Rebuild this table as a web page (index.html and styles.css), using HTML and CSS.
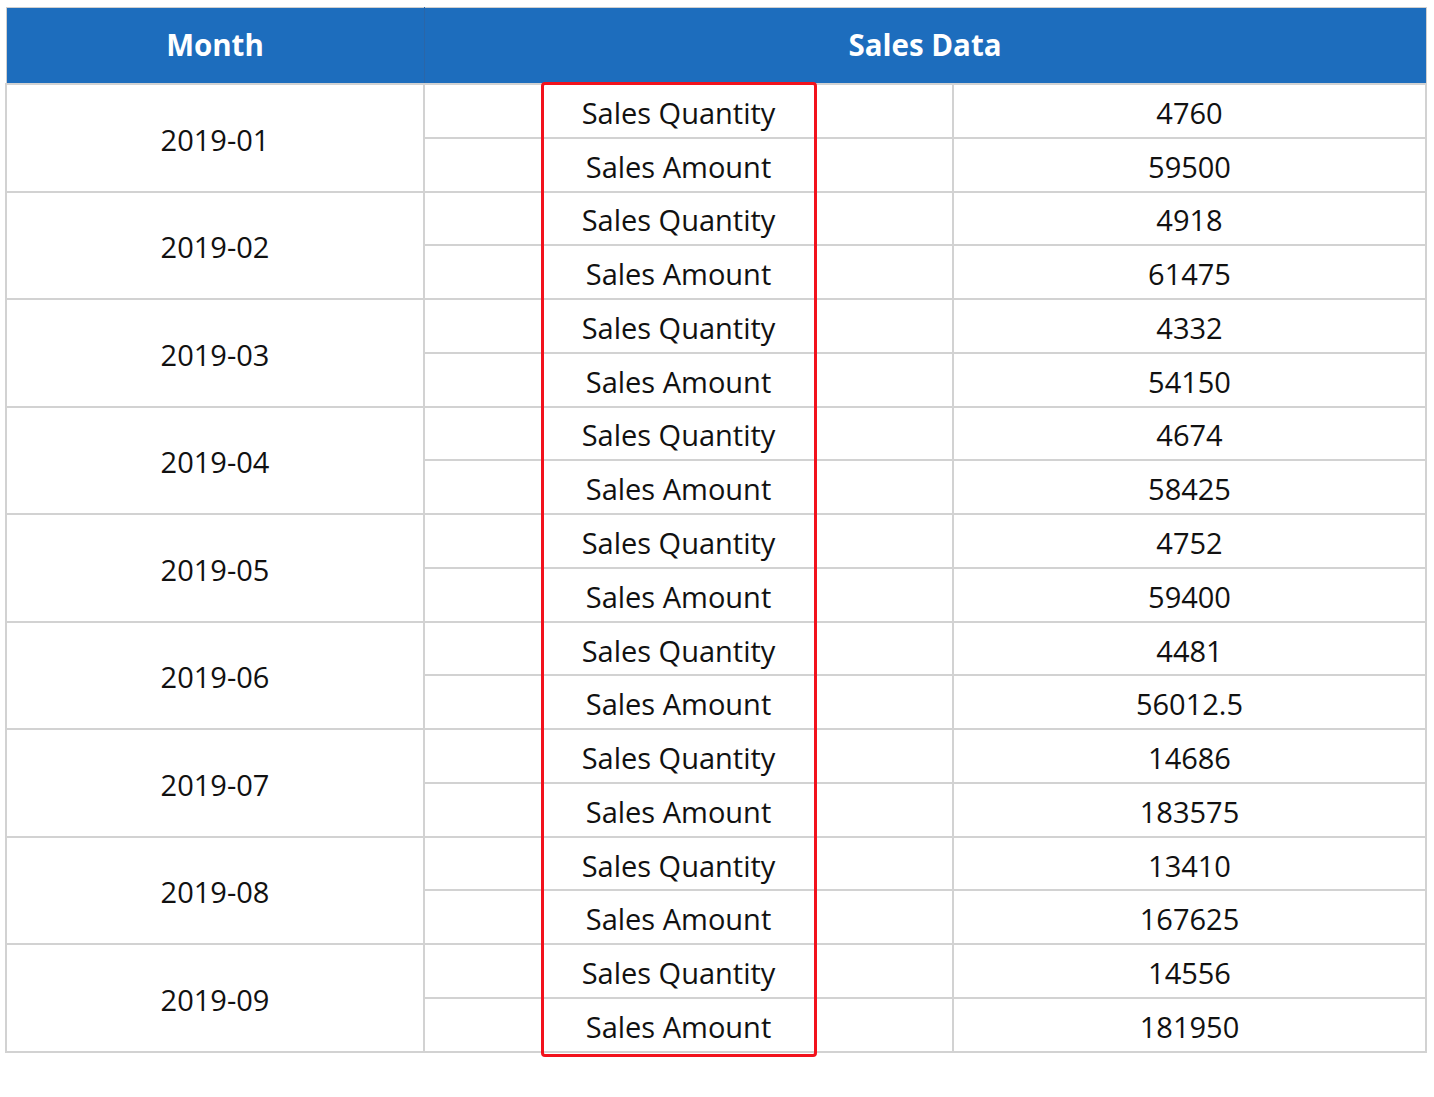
FILE: index.html
```html
<!DOCTYPE html>
<html>
<head>
<meta charset="utf-8">
<link rel="stylesheet" href="styles.css">
</head>
<body>
<div class="wrap">
<table class="sales">
<colgroup>
<col class="col-month">
<col class="col-label">
<col class="col-val">
</colgroup>
<thead>
<tr><th class="c-month">Month</th><th colspan="2">Sales Data</th></tr>
</thead>
<tbody>
<tr><td class="month" rowspan="2">2019-01</td><td class="label">Sales Quantity</td><td class="val">4760</td></tr>
<tr><td class="label">Sales Amount</td><td class="val">59500</td></tr>
<tr><td class="month" rowspan="2">2019-02</td><td class="label">Sales Quantity</td><td class="val">4918</td></tr>
<tr><td class="label">Sales Amount</td><td class="val">61475</td></tr>
<tr><td class="month" rowspan="2">2019-03</td><td class="label">Sales Quantity</td><td class="val">4332</td></tr>
<tr><td class="label">Sales Amount</td><td class="val">54150</td></tr>
<tr><td class="month" rowspan="2">2019-04</td><td class="label">Sales Quantity</td><td class="val">4674</td></tr>
<tr><td class="label">Sales Amount</td><td class="val">58425</td></tr>
<tr><td class="month" rowspan="2">2019-05</td><td class="label">Sales Quantity</td><td class="val">4752</td></tr>
<tr><td class="label">Sales Amount</td><td class="val">59400</td></tr>
<tr><td class="month" rowspan="2">2019-06</td><td class="label">Sales Quantity</td><td class="val">4481</td></tr>
<tr><td class="label">Sales Amount</td><td class="val">56012.5</td></tr>
<tr><td class="month" rowspan="2">2019-07</td><td class="label">Sales Quantity</td><td class="val">14686</td></tr>
<tr><td class="label">Sales Amount</td><td class="val">183575</td></tr>
<tr><td class="month" rowspan="2">2019-08</td><td class="label">Sales Quantity</td><td class="val">13410</td></tr>
<tr><td class="label">Sales Amount</td><td class="val">167625</td></tr>
<tr><td class="month" rowspan="2">2019-09</td><td class="label">Sales Quantity</td><td class="val">14556</td></tr>
<tr><td class="label">Sales Amount</td><td class="val">181950</td></tr>
</tbody>
</table>
<div class="highlight"></div>
</div>
</body>
</html>
```
FILE: styles.css
```css
html, body {
  margin: 0;
  padding: 0;
  background: #ffffff;
}
body {
  font-family: "Open Sans", "Noto Sans", sans-serif;
  color: #111111;
}
.wrap {
  position: relative;
  width: 1422px;
  margin: 7px 0 0 5px;
  padding-bottom: 40px;
}
.sales {
  width: 1422px;
  border-collapse: collapse;
  table-layout: fixed;
  border: 1px solid #cfcfcf;
}
.col-month { width: 418px; }
.col-label { width: 529px; }
.col-val { width: 473px; }
.sales th {
  background: #1d6dbd;
  color: #ffffff;
  font-weight: 700;
  font-size: 29.5px;
  height: 72px;
  padding: 0 0 3px 0;
  text-align: center;
  vertical-align: middle;
}
.sales th.c-month {
  border-right: 1px solid #2a66a8;
}
.sales td {
  height: 48.78px;
  padding: 3px 0 0 0;
  font-size: 29px;
  text-align: center;
  vertical-align: middle;
  border: 2px solid #d2d2d2;
  line-height: 1;
}
.sales td.label {
  padding-right: 20px;
}
.highlight {
  position: absolute;
  left: 536px;
  top: 75px;
  width: 270px;
  height: 969px;
  border: 3px solid #f2121c;
  border-radius: 4px;
}
```
